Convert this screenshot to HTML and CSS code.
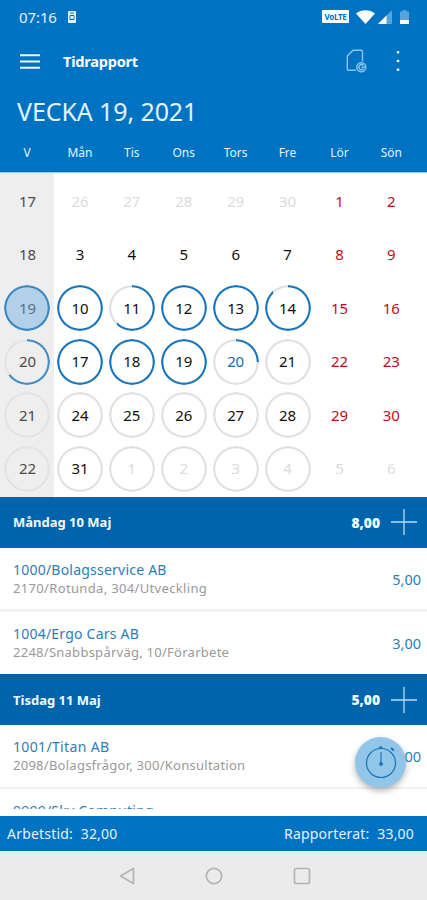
FILE: index.html
```html
<!DOCTYPE html>
<html lang="sv">
<head>
<meta charset="utf-8">
<meta name="viewport" content="width=device-width, initial-scale=1">
<title>Tidrapport</title>
<link rel="stylesheet" href="styles.css">
</head>
<body>
<div class="app">
  <header class="top">
    <div class="status">
      <span class="clock">07:16</span>
      <svg class="sim" width="8" height="12" viewBox="0 0 8 12"><rect width="8" height="12" rx="1" fill="#e5f3fc"/><path d="M2 2h4M2 4.500h4v4H2z" stroke="#0072c0" fill="none"/></svg>
      <span class="volte">VoLTE</span>
      <svg class="wifi" width="19" height="14" viewBox="0 0 19 14"><path d="M0 3.500C5-1 14-1 19 3.500L9.500 14z" fill="#fff"/></svg>
      <svg class="signal" width="14" height="14" viewBox="0 0 14 14"><path d="M14 0v14H0z" fill="#57a4dc"/><path d="M8.500 5.500V14H0z" fill="#fff"/></svg>
      <svg class="battery" width="9" height="14" viewBox="0 0 9 14"><path d="M2.500 0h4v1.500H9V14H0V1.500h2.500z" fill="#57a4dc"/><path d="M0 10h9v4H0z" fill="#fff"/></svg>
    </div>
    <div class="bar">
      <svg class="menu" width="20" height="15" viewBox="0 0 20 15"><path d="M0 1.200h20M0 7.500h20M0 13.800h20" stroke="#eef8ff" stroke-width="2"/></svg>
      <h1 class="title">Tidrapport</h1>
      <svg class="doc" width="22" height="24" viewBox="0 0 22 24" fill="none" stroke="#8cc6ef" stroke-width="1.400"><path d="M10 21.300H2.500Q1.300 21.300 1.300 20V7L7 1.300h8.200q1.300 0 1.300 1.300v10"/><circle cx="15.300" cy="18.200" r="4.500"/><path d="M17.500 16.500a2.600 2.600 0 1 0 0 3.300M15.500 18.200h3.500"/></svg>
      <svg class="more" width="4" height="22" viewBox="0 0 4 22" fill="#eef8ff"><rect x=".7" y="1" width="2.600" height="2.600" rx=".8"/><rect x=".7" y="9.700" width="2.600" height="2.600" rx=".8"/><rect x=".7" y="18.400" width="2.600" height="2.600" rx=".8"/></svg>
    </div>
    <h2 class="week">VECKA 19, 2021</h2>
    <div class="days"><span>V</span><span>Mån</span><span>Tis</span><span>Ons</span><span>Tors</span><span>Fre</span><span>Lör</span><span>Sön</span></div>
  </header>

  <section class="calendar">
    <span class="wk">17</span><span class="out">26</span><span class="out">27</span><span class="out">28</span><span class="out">29</span><span class="out">30</span><span class="red">1</span><span class="red">2</span>
    <span class="wk">18</span><span>3</span><span>4</span><span>5</span><span>6</span><span>7</span><span class="red">8</span><span class="red">9</span>
    <span class="wk ring current" style="--p:100%">19</span><span class="ring" style="--p:100%">10</span><span class="ring" style="--p:62%">11</span><span class="ring" style="--p:100%">12</span><span class="ring" style="--p:100%">13</span><span class="ring" style="--p:88%">14</span><span class="red">15</span><span class="red">16</span>
    <span class="wk ring" style="--p:65%">20</span><span class="ring" style="--p:100%">17</span><span class="ring" style="--p:100%">18</span><span class="ring" style="--p:100%">19</span><span class="ring today" style="--p:25%">20</span><span class="ring">21</span><span class="red">22</span><span class="red">23</span>
    <span class="wk ring">21</span><span class="ring">24</span><span class="ring">25</span><span class="ring">26</span><span class="ring">27</span><span class="ring">28</span><span class="red">29</span><span class="red">30</span>
    <span class="wk ring">22</span><span class="ring">31</span><span class="ring out">1</span><span class="ring out">2</span><span class="ring out">3</span><span class="ring out">4</span><span class="out">5</span><span class="out">6</span>
  </section>

  <main class="list">
    <div class="day"><span class="date">Måndag 10 Maj</span><b>8,00</b><svg width="26" height="26" viewBox="0 0 26 26"><path d="M0 13h26M13 0v26" stroke="#b5dbf3" stroke-width="1.300"/></svg></div>
    <article class="entry"><div><p class="customer">1000/Bolagsservice AB</p><p class="project p1">2170/Rotunda, 304/Utveckling</p></div><span class="hours">5,00</span></article>
    <article class="entry"><div><p class="customer">1004/Ergo Cars AB</p><p class="project">2248/Snabbspårväg, 10/Förarbete</p></div><span class="hours">3,00</span></article>
    <div class="day"><span class="date">Tisdag 11 Maj</span><b>5,00</b><svg width="26" height="26" viewBox="0 0 26 26"><path d="M0 13h26M13 0v26" stroke="#b5dbf3" stroke-width="1.300"/></svg></div>
    <article class="entry last"><div><p class="customer c3">1001/Titan AB</p><p class="project">2098/Bolagsfrågor, 300/Konsultation</p></div><span class="hours">5,00</span></article>
    <div class="partial"><p class="customer">9999/Sky Computing</p></div>
    <button class="timer" aria-label="Timer"><svg width="34" height="36" viewBox="0 0 34 36" fill="none" stroke="#1c75b8" stroke-width="1.200"><circle cx="17" cy="19" r="14.500"/><path d="M17 8v11"/><circle cx="17" cy="20" r="1.300" fill="#1c75b8"/><path d="M15 3.700h3.500M27 4l3 2.500" stroke-width="2.200"/></svg></button>
  </main>

  <footer class="totals"><span>Arbetstid:&nbsp; 32,00</span><span>Rapporterat:&nbsp; 33,00</span></footer>
  <nav class="nav">
    <svg width="16" height="18" viewBox="0 0 16 18"><path d="M14.500 1.500v15L1.500 9z"/></svg>
    <svg width="18" height="18" viewBox="0 0 18 18"><circle cx="9" cy="9" r="7.700"/></svg>
    <svg width="18" height="18" viewBox="0 0 18 18"><rect x="1.500" y="1.500" width="15" height="15" rx="2"/></svg>
  </nav>
</div>
</body>
</html>
```
FILE: styles.css
```css
* { box-sizing: border-box; margin: 0; padding: 0; }
body { font-family: "Noto Sans", "Open Sans", sans-serif; background: #fff; }
.app { width: 427px; height: 900px; display: flex; flex-direction: column; overflow: hidden; }
svg { display: block; flex: none; }

.top { height: 173px; flex: none; background: #0072c2; color: #e4f3fd; border-bottom: 1px solid #8fcdf3; }
.status { height: 33px; display: flex; align-items: center; padding: 0 18px 0 19px; }
.clock { font-size: 15px; width: 49px; letter-spacing: -.1px; white-space: nowrap; }
.volte { margin-left: auto; width: 27px; height: 13px; border-radius: 1px; background: #fff; color: #0072c2; font-size: 8px; font-weight: 700; line-height: 13px; text-align: center; letter-spacing: -.3px; }
.wifi { margin-left: 7px; }
.signal { margin-left: 3px; }
.battery { margin-left: 8px; }
.bar { height: 55px; display: flex; align-items: center; padding: 1px 27px 0 20px; }
.title { margin-left: 23px; font-size: 14.6px; font-weight: 700; letter-spacing: -.25px; flex: 1; color: #fff; }
.more { margin-left: 28px; }
.week { height: 48px; line-height: 47px; padding-left: 17px; font-size: 25px; font-weight: 400; letter-spacing: -.1px; }
.days { height: 34px; }
.days, .calendar { display: grid; grid-template-columns: 54px repeat(7, 51.9px); }
.days span { text-align: center; font-size: 12px; line-height: 33px; }

.calendar { height: 323.5px; flex: none; grid-template-rows: repeat(6, 53.5px); padding-top: 1px; background: linear-gradient(90deg, #eee 54px, #fff 54px); }
.calendar span { display: flex; align-items: center; justify-content: center; position: relative; font-size: 15px; letter-spacing: -.1px; font-weight: 400; color: #111; }
.calendar .wk { color: #4c4c4c; padding-left: 1px; }
.calendar .out { color: #dcdcdc; }
.calendar .red { color: #b90f1c; }
.calendar .today { color: #1269b5; }
.ring::before { content: ""; position: absolute; width: 46px; height: 46px; left: calc(50% - 23px); top: calc(50% - 22.500px); border-radius: 50%; background: conic-gradient(#1a76bd var(--p, 0%), #e0e0e0 var(--p, 0%)); -webkit-mask: radial-gradient(circle, transparent 20.200px, #000 21.100px); mask: radial-gradient(circle, transparent 20.200px, #000 21.100px); }
.wk.ring::before { opacity: .8; }
.calendar .current { color: #58728a; background: radial-gradient(circle at 50% calc(50% + .5px), #b2d0e7 22px, transparent 22.500px); }

.list { flex: 1; min-height: 0; position: relative; overflow: hidden; }
.day { height: 51px; display: flex; align-items: center; padding: 0 10px 0 13px; background: #0064ac; color: #f3faff; font-size: 13px; font-weight: 700; }
.day .date { flex: 1; }
.day b { font-size: 13.8px; margin-right: 11px; }
.entry { height: 64px; display: flex; justify-content: space-between; align-items: center; padding: 1px 6px 0 13px; border-bottom: 3px solid #f3f3f3; }
.day + .entry + .entry { border-bottom: 0; height: 62.500px; }
.entry.last { height: 63.500px; border-bottom: 2px solid #f1f1f1; }
.customer { font-size: 14px; line-height: 19px; letter-spacing: .22px; color: #2b7dbb; white-space: nowrap; }
.customer.c3 { letter-spacing: .35px; }
.project { font-size: 13px; line-height: 19px; letter-spacing: .26px; color: #999; white-space: nowrap; }
.project.p1 { letter-spacing: .34px; }
.hours { font-size: 14.5px; color: #2b7dbb; }
.partial { height: 20.500px; padding: 12px 0 0 13px; overflow: hidden; }
.timer { position: absolute; left: 355px; top: 240px; width: 51px; height: 51px; border: 0; border-radius: 50%; background: #91c6e9; box-shadow: 0 3px 6px rgba(60, 40, 40, .35); display: flex; align-items: center; justify-content: center; }

.totals { height: 35px; flex: none; display: flex; justify-content: space-between; align-items: center; padding: 0 13px 0 7px; background: #0072c2; color: #e4f3fd; font-size: 14px; letter-spacing: .2px; white-space: nowrap; }
.nav { height: 49px; flex: none; display: flex; align-items: center; padding-left: 119px; gap: 70px; background: #ebebeb; }
.nav svg { fill: none; stroke: #b4b4b4; stroke-width: 1.700; stroke-linejoin: round; }
```
